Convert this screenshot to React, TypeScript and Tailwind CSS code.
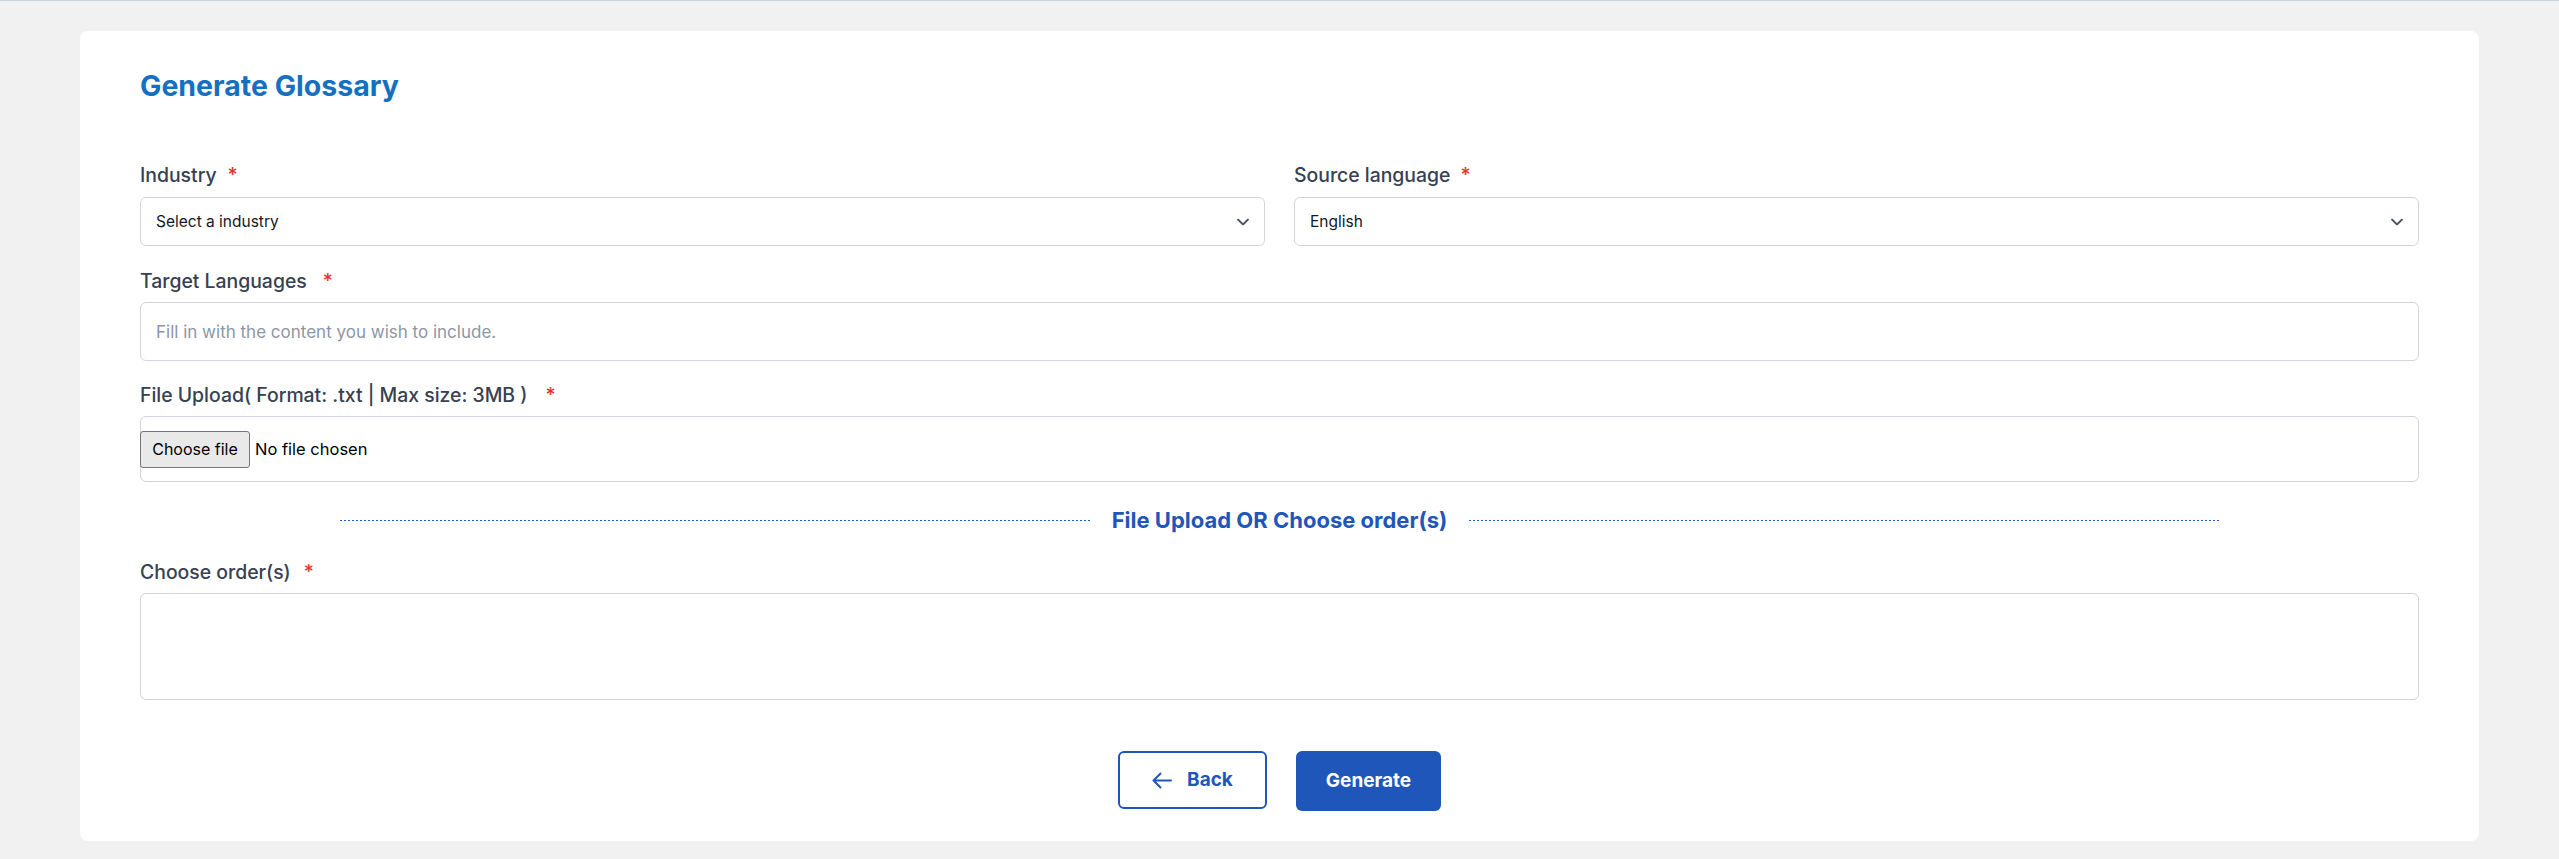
import React from 'react';

const labelCls = "block text-[19.4px] leading-[28px] font-medium text-[#374151]";
const boxCls = "w-full border border-[#d1d5db] rounded-[6px] bg-white";

function Label({ text, gap }: { text: string; gap: string }) {
  return (
    <label className={labelCls}>
      {text}
      <span className={`${gap} text-[#e5322d]`}>*</span>
    </label>
  );
}

function Chevron() {
  return (
    <svg width="12" height="7" viewBox="0 0 12 7" fill="none" className="pointer-events-none absolute right-[16px] top-1/2 -translate-y-1/2">
      <path d="M1 1l5 5 5-5" stroke="#4b5563" strokeWidth="1.8" strokeLinecap="round" strokeLinejoin="round" />
    </svg>
  );
}

function SelectField({ label, gap, value }: { label: string; gap: string; value: string }) {
  return (
    <div>
      <Label text={label} gap={gap} />
      <div className="relative mt-[8px]">
        <select
          defaultValue={value}
          className={`${boxCls} h-[49px] appearance-none pl-[15px] pr-10 text-[15.5px] text-[#111827] outline-none`}
        >
          <option value={value}>{value}</option>
        </select>
        <Chevron />
      </div>
    </div>
  );
}

export default function App() {
  return (
    <div className="min-h-screen bg-[#f1f1f1] border-t border-[#c8d4e4] font-['Inter',sans-serif] px-[80px] pt-[30px] pb-[18px]">
      <div className="bg-white rounded-[8px] px-[60px] pt-[37px] pb-[30px]">
        <h1 className="text-[28.5px] leading-[36px] font-bold text-[#1470c0]">Generate Glossary</h1>

        {/* Industry / source language */}
        <div className="grid grid-cols-2 gap-x-[29px] mt-[57px]">
          <SelectField label="Industry" gap="ml-[11px]" value="Select a industry" />
          <SelectField label="Source language" gap="ml-[10px]" value="English" />
        </div>

        {/* Target languages */}
        <div className="mt-[21px]">
          <Label text="Target Languages" gap="ml-[16px]" />
          <input
            type="text"
            placeholder="Fill in with the content you wish to include."
            className={`${boxCls} mt-[7px] h-[59px] px-[15px] text-[17px] text-[#111827] placeholder:text-[#8d96a5] outline-none`}
          />
        </div>

        {/* File upload */}
        <div className="mt-[20px]">
          <Label text="File Upload( Format: .txt | Max size: 3MB )" gap="ml-[18px]" />
          <div className={`${boxCls} mt-[7px] h-[66px] flex items-center`}>
            <button className="-ml-px h-[37px] w-[110px] bg-[#e9e9e9] border border-[#767676] rounded-[3px] text-[16px] text-black">
              Choose file
            </button>
            <span className="ml-[5px] text-[16.5px] text-black">No file chosen</span>
          </div>
        </div>

        {/* Divider */}
        <div className="mx-[200px] mt-[23px] flex items-center">
          <div className="flex-1 h-px bg-[linear-gradient(to_right,#2160c4_50%,transparent_50%)] bg-[length:4px_1px] bg-repeat-x" />
          <span className="px-[22px] text-[22px] leading-[30px] font-bold text-[#1f56b9]">File Upload OR Choose order(s)</span>
          <div className="flex-1 h-px bg-[linear-gradient(to_right,#2160c4_50%,transparent_50%)] bg-[length:4px_1px] bg-repeat-x" />
        </div>

        {/* Orders */}
        <div className="mt-[23px]">
          <Label text="Choose order(s)" gap="ml-[13px]" />
          <textarea className={`${boxCls} block mt-[7px] h-[107px] resize-none outline-none`} />
        </div>

        {/* Actions */}
        <div className="mt-[51px] flex justify-center items-start gap-[29px]">
          <button className="w-[149px] h-[58px] border-2 border-[#1f56b9] rounded-[6px] flex items-center justify-center gap-[15px] text-[#1f56b9] text-[19px] font-bold">
            <svg width="20" height="17" viewBox="0 0 20 17" fill="none">
              <path d="M19 8.5H1.5M8.5 1.5L1.5 8.5l7 7" stroke="currentColor" strokeWidth="2" strokeLinecap="round" strokeLinejoin="round" />
            </svg>
            Back
          </button>
          <button className="w-[145px] h-[60px] bg-[#1f56b9] rounded-[6px] text-white text-[19px] font-bold">
            Generate
          </button>
        </div>
      </div>
    </div>
  );
}
